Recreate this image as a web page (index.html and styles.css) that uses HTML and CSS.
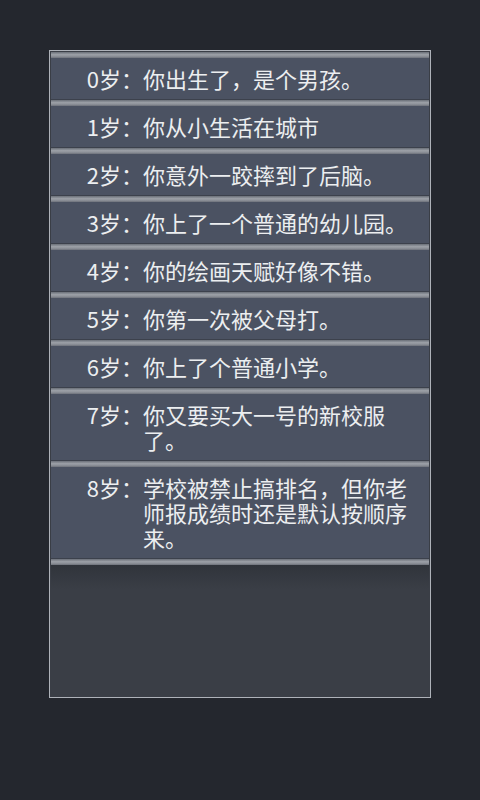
FILE: index.html
```html
<!DOCTYPE html>
<html lang="zh-CN">
<head>
<meta charset="utf-8">
<title>人生</title>
<link rel="stylesheet" href="styles.css">
</head>
<body>
<div class="frame">
  <div class="row"><span class="age">0岁：</span><span class="text">你出生了，是个男孩。</span></div>
  <div class="row"><span class="age">1岁：</span><span class="text">你从小生活在城市</span></div>
  <div class="row"><span class="age">2岁：</span><span class="text">你意外一跤摔到了后脑。</span></div>
  <div class="row"><span class="age">3岁：</span><span class="text">你上了一个普通的幼儿园。</span></div>
  <div class="row"><span class="age">4岁：</span><span class="text">你的绘画天赋好像不错。</span></div>
  <div class="row"><span class="age">5岁：</span><span class="text">你第一次被父母打。</span></div>
  <div class="row"><span class="age">6岁：</span><span class="text">你上了个普通小学。</span></div>
  <div class="row"><span class="age">7岁：</span><span class="text">你又要买大一号的新校服了。</span></div>
  <div class="row"><span class="age">8岁：</span><span class="text">学校被禁止搞排名，但你老师报成绩时还是默认按顺序来。</span></div>
  <div class="rest"></div>
</div>
</body>
</html>
```

FILE: styles.css
```css
html, body {
  margin: 0;
  padding: 0;
}
body {
  background: #24272e;
  width: 480px;
  height: 800px;
  padding: 50px 0 0 49px;
  box-sizing: border-box;
  font-family: "Noto Sans CJK SC", "Noto Sans", sans-serif;
}
.frame {
  width: 382px;
  height: 648px;
  box-sizing: border-box;
  border: 1px solid #aeb2b9;
  background: #3a3e46;
  padding: 1px 1px 0 1px;
  display: flex;
  flex-direction: column;
}
.row {
  display: grid;
  grid-template-columns: 92px 268px;
  background: #4b5262;
  padding: 14px 0 8px;
  border-bottom: 1px solid #3c414c;
  position: relative;
  font-size: 22px;
  line-height: 25px;
  color: #eceef0;
}
.row::before,
.rest::before {
  content: "";
  position: absolute;
  left: 0;
  right: 0;
  top: 0;
  height: 6px;
  background: linear-gradient(#6a6f78, #9da1a8 45%, #858991 80%, #6c7079);
}
.age {
  text-align: right;
}
.text {
  word-break: break-all;
}
.rest {
  flex: 1;
  position: relative;
  background: linear-gradient(#30343b 6px, #3a3e46 30px, #3a3e46);
}
```
